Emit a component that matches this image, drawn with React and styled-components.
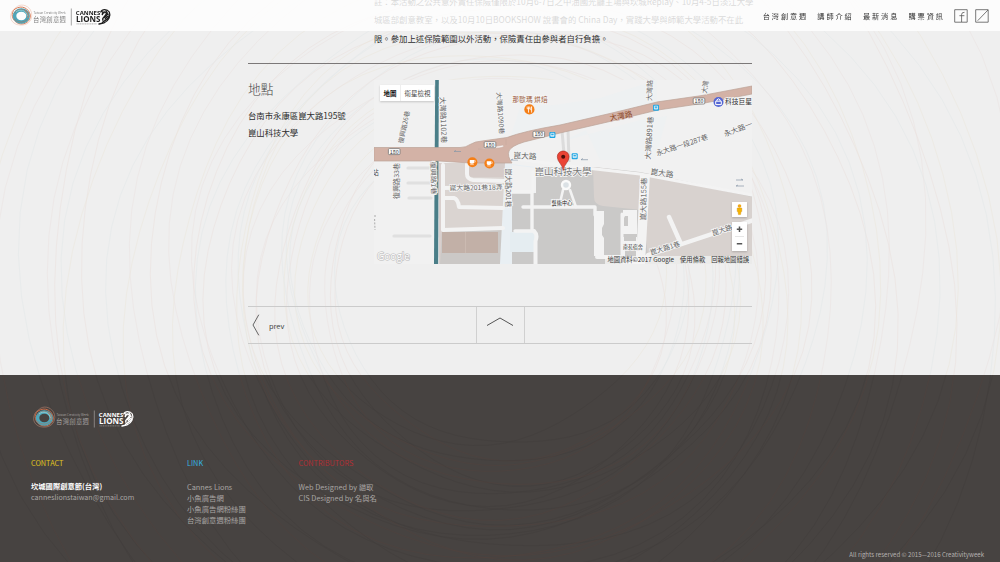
import React from 'react';
import styled, { createGlobalStyle } from 'styled-components';

const SANS = `"Noto Sans CJK TC", "Noto Sans", sans-serif`;

const GlobalStyle = createGlobalStyle`
  * { box-sizing: border-box; }
  html, body { margin: 0; padding: 0; }
  body { background: #efefef; font-family: ${SANS}; color: #333; overflow: hidden; }
  a { color: inherit; text-decoration: none; }
  p, h2, h3, ul { margin: 0; padding: 0; font-weight: inherit; list-style: none; }
`;

const Page = styled.div`
  position: relative;
  height: 562px;
  display: flex;
  flex-direction: column;
  overflow: hidden;
`;

const Backdrop = styled.svg`
  position: absolute;
  inset: 0;
  pointer-events: none;
`;

const Header = styled.header`
  position: fixed;
  top: 0;
  left: 0;
  z-index: 5;
  width: 100%;
  height: 31px;
  padding: 0 11.5px 0 8px;
  display: flex;
  align-items: center;
  justify-content: space-between;
  background: rgba(255, 255, 255, 0.82);
`;

const Nav = styled.nav`
  display: flex;
  align-items: center;
`;

const NavLink = styled.a`
  margin-right: 9.2px;
  font-size: 7.2px;
  line-height: 12px;
  letter-spacing: 1.9px;
  color: #333;
  white-space: nowrap;
`;

const Social = styled.a`
  display: block;
  width: 14px;
  height: 14px;
  margin-left: ${(p) => p.$gap || 0}px;
  svg { display: block; }
`;

const Content = styled.main`
  position: relative;
  width: 504px;
  height: 375px;
  flex: none;
  margin: 0 auto;
`;

const Notice = styled.p`
  margin: -8.5px -10px 0 126px;
  font-size: 8.38px;
  line-height: 18.7px;
  color: #2d2d2d;
  white-space: nowrap;
`;

const Venue = styled.section`
  display: flex;
  margin-top: 15.4px;
  padding-top: 16px;
  border-top: 1px solid #7b7878;
`;

const VenueInfo = styled.div`
  width: 126px;
`;

const VenueTitle = styled.h2`
  margin-top: 0;
  font-size: 12.7px;
  font-weight: 300;
  line-height: 18px;
  color: #444;
`;

const Address = styled.p`
  margin-top: 9px;
  font-size: 8.4px;
  line-height: 16.8px;
  color: #2b2b2b;
  white-space: nowrap;
`;

const MapFrame = styled.div`
  position: relative;
  width: 378px;
  height: 184px;
  overflow: hidden;
  svg { display: block; }
`;

const MapTypes = styled.div`
  position: absolute;
  left: 6px;
  top: 5px;
  display: flex;
  height: 16px;
  background: #fff;
  box-shadow: 0 1px 2px rgba(0, 0, 0, 0.18);
`;

const MapType = styled.button`
  width: ${(p) => p.$width}px;
  padding: 0;
  border: 0;
  border-left: ${(p) => (p.$active ? 0 : '1px solid #eee')};
  background: none;
  font: ${(p) => (p.$active ? 700 : 400)} 6.5px/16px ${SANS};
  color: ${(p) => (p.$active ? '#111' : '#444')};
`;

const MapTools = styled.div`
  position: absolute;
  right: 5px;
  top: 122px;
  display: flex;
  flex-direction: column;
  gap: 5px;
`;

const ToolBox = styled.div`
  width: 15px;
  display: flex;
  flex-direction: column;
  align-items: center;
  background: #fff;
  box-shadow: 0 1px 2px rgba(0, 0, 0, 0.2);
`;

const Credits = styled.div`
  position: absolute;
  right: 0;
  bottom: 0;
  height: 8px;
  padding: 0 3px 0 2px;
  display: flex;
  gap: 6px;
  background: rgba(245, 245, 245, 0.75);
  font-size: 6.3px;
  line-height: 8px;
  color: #333;
  white-space: nowrap;
`;

const Pager = styled.div`
  display: grid;
  grid-template-columns: 229px 47.5px 1fr;
  height: 38px;
  margin-top: 42px;
  border-top: 1px solid #cbcbcb;
  border-bottom: 1px solid #cbcbcb;
`;

const PagerCell = styled.a`
  display: flex;
  align-items: center;
  padding-left: ${(p) => p.$indent || 0}px;
  gap: 9px;
  border-right: ${(p) => (p.$last ? 0 : '1px solid #d0d0d0')};
  font-size: 7.4px;
  color: #444;
`;

const Footer = styled.footer`
  position: relative;
  flex: 1;
  padding: 28px 16px 0 31px;
  background: #474341;
  color: #aaa7a5;
  font-size: 7.35px;
  line-height: 11px;
`;

const FooterLogo = styled.div`
  height: 30px;
`;

const Columns = styled.div`
  display: flex;
  margin-top: 25px;
  height: 91px;
`;

const Column = styled.div`
  width: ${(p) => p.$width}px;
  white-space: nowrap;
`;

const ColumnTitle = styled.h3`
  margin-bottom: 12px;
  color: ${(p) => p.$color};
  font-size: 7.3px;
`;

const Strong = styled.p`
  color: #fff;
  font-weight: 700;
  font-size: 7.3px;
`;

const Email = styled.p`
  font-size: 7.12px;
`;

const Copyright = styled.p`
  font-size: 6.1px;
  text-align: right;
  color: #b5b2b0;
`;

function wobble(cx, cy, rx, ry, phase) {
  const points = [];
  for (let i = 0; i <= 72; i += 1) {
    const t = (i / 72) * Math.PI * 2;
    const k = 1 + 0.04 * Math.sin(2 * t + phase) + 0.012 * Math.sin(5 * t + phase * 2.3);
    points.push(`${(cx + rx * k * Math.cos(t)).toFixed(1)} ${(cy + ry * k * Math.sin(t)).toFixed(1)}`);
  }
  return `M${points.join('L')}Z`;
}

const threadColors = ['#d99a88', '#a9c6cc', '#dcc080', '#d9a8a0'];

function Threads({ opacity, dark }) {
  const rings = [];
  for (let i = 0; i < 40; i += 1) {
    const r = i < 24 ? 165 + i * 5.5 : 297 + (i - 24) * 14;
    rings.push(
      <path
        key={i}
        d={wobble(500 + Math.sin(i * 2.1) * 14, 285 + Math.cos(i * 1.7) * 12, r, r * 0.98, i * 1.37)}
        stroke={dark ? (i % 3 ? '#2b2726' : '#7a4030') : threadColors[i % threadColors.length]}
      />
    );
  }
  return <g fill="none" strokeWidth="0.5" opacity={opacity}>{rings}</g>;
}

function Logo({ ink, sub }) {
  return (
    <svg width="106" height="30" viewBox="8 1 106 30">
      <g fill="none">
        <path d="M16 7.5C20 3.5 27 4.5 30.5 10C34 17 30 24.5 23 25C15 26 9 21 11 14C12 10.5 13 9.5 16 7.5Z" stroke="#e4a184" strokeWidth=".5" opacity=".8" />
        <path d="M15 9C22 4.5 29 8.5 30.3 15C31 21 25 25.5 18.5 23.5C12 21 10 13 15 9Z" stroke="#d5714a" strokeWidth=".9" />
        <ellipse cx="21.3" cy="16" rx="6.8" ry="6" stroke="#4fa6b9" strokeWidth="3.6" />
        <path d="M14 13.5C17 8 25 8 28.5 13M28 19C23 24 16 22 14 18.5" stroke="#7d8a88" strokeWidth="1" />
        <path d="M16 12C20 8.6 26 10 27.5 16" stroke="#8ccbd3" strokeWidth="1" />
        <path d="M25 10.5Q29 13 28 18" stroke="#cf7c5a" strokeWidth=".9" />
      </g>
      <text x="33.5" y="13.6" fontFamily={SANS} fontSize="2.9" fill={sub} textLength="32">Taiwan Creativity Week</text>
      <text x="33" y="21.5" fontFamily={SANS} fontSize="6.4" fill={sub} textLength="33">台灣創意週</text>
      <path d="M71.3 8.5V25.5" stroke={sub} strokeWidth=".7" />
      <g fill={ink} fontFamily={`"Open Sans", Lato, ${SANS}`} fontWeight="700">
        <text x="75.8" y="15" fontSize="5.4" textLength="24.5" lengthAdjust="spacingAndGlyphs">CANNES</text>
        <text x="76" y="22.2" fontSize="8.2" textLength="24.5" lengthAdjust="spacingAndGlyphs">LIONS</text>
      </g>
      <path d="M76.5 23.9H97" stroke={ink} strokeWidth=".7" strokeDasharray="1.2 .5" opacity=".5" />
      <g fill="none" stroke={ink} strokeLinecap="round">
        <path d="M100.8 12C102 9 107 8.7 109.3 12C111 16 108.5 21 104 22.8L99 24" strokeWidth="1.3" />
        <path d="M102.3 14.5C103 11 107 11.5 106.3 14C105.7 17 101.8 17 102.8 20M109.3 16C108 20 104.5 20 102.5 22.5" strokeWidth="1.5" />
        <path d="M101.8 11.5L104 13M106 10.5L108.5 15M105 19L107.5 16.5M104.5 17.5L108 14" strokeWidth="1.1" />
      </g>
    </svg>
  );
}

function Shield({ x, y }) {
  return (
    <g>
      <rect x={x - 5.8} y={y - 3} width="11.6" height="6" rx="1" fill="#fff" stroke="#777" strokeWidth=".8" />
      <text x={x} y={y + 2} fontSize="5.3" textAnchor="middle" fill="#333">180</text>
    </g>
  );
}

function Stop({ x, y }) {
  return (
    <g>
      <rect x={x - 3} y={y - 3} width="6" height="6" rx="1" fill="#1ca4e2" />
      <path d={`M${x - 1.6} ${y - 1.7}h3.2v3h-3.2zM${x - 1.6} ${y + 0.4}h3.2`} fill="none" stroke="#fff" strokeWidth=".7" />
    </g>
  );
}

function Cafe({ x, y }) {
  return (
    <g>
      <circle cx={x} cy={y} r="5" fill="#f57f17" />
      <path d={`M${x - 2.6} ${y - 2.2}h4.2v2.4q0 1.4-2.1 1.4t-2.1-1.4z`} fill="#fff" />
      <path d={`M${x + 1.6} ${y - 1.6}h1.2v1.5h-1.2M${x - 2.2} ${y + 2.4}h3.6`} fill="none" stroke="#fff" strokeWidth=".6" />
    </g>
  );
}

const mapLabels = [
  { t: '復興路26巷', x: 404, y: 127, r: -78, s: 6.6, w: 33 },
  { t: '大灣路1102巷', x: 443.5, y: 120, r: 88, s: 7.2, w: 46 },
  { t: '大灣路1090巷', x: 500.5, y: 113, r: 86, s: 6.6, w: 42 },
  { t: '復興路33巷', x: 396.5, y: 181, r: -90, s: 6.8, w: 36 },
  { t: '復興路1巷', x: 433.5, y: 178, r: 88, s: 6.6, w: 33 },
  { t: '崑大路201巷18弄', x: 476, y: 187.5, r: -1, s: 6.8, w: 53 },
  { t: '崑大路201巷', x: 508, y: 188, r: 90, s: 6.6, w: 39 },
  { t: '崑大路', x: 525, y: 155.8, r: 3, s: 7.8, w: 23 },
  { t: '大灣路', x: 649.5, y: 90.3, r: -88, s: 7, w: 21 },
  { t: '大灣', x: 705, y: 87, r: -80, s: 7, w: 13 },
  { t: '大灣路891巷', x: 649, y: 138, r: -86, s: 7.2, w: 43 },
  { t: '永大路一段287巷', x: 682, y: 145, r: -18, s: 7.2, w: 54 },
  { t: '永大路一 ', x: 738, y: 129, r: -21, s: 7.2, w: 30 },
  { t: '崑大路', x: 662, y: 173, r: 8, s: 7.8, w: 23 },
  { t: '崑大路155巷', x: 643.5, y: 199, r: -89, s: 7.2, w: 43 },
  { t: '崑大路1巷', x: 665, y: 248, r: -17, s: 7, w: 31 },
  { t: '崑大路', x: 722, y: 230, r: -17, s: 7.2, w: 21 },
];

function CampusMap() {
  return (
    <svg width="378" height="184" viewBox="374 80 378 184" fontFamily={SANS}>
      <rect x="374" y="80" width="378" height="184" fill="#f1f1f1" />
      <path d="M520 107L555 105L600 98L657 80V104L565 128L510 138L516 120ZM560 142L640 120L667 116L655 160H600L586 130Z" fill="#eef1f2" />
      <g fill="none" stroke="#e0e0e0" strokeWidth="3.2" strokeLinecap="round">
        <path d="M408 168H431M408 183H431M409 198H431M394 236H430" />
      </g>

      <path d="M443 163H505L504 228L442 232Z" fill="#dad4d1" />
      <path d="M439 163H442V264H439Z" fill="#d9cfcd" />
      <path d="M466 163H506V177H474Q466 177 466 172Z" fill="#d5cbc8" />
      <path d="M442 230L503 229V264H440Z" fill="#cbc8c6" />
      <path d="M442 232H498V253H442Z" fill="#c2b0a7" />
      <path d="M465.5 232V253" stroke="#cbbab1" strokeWidth="1" />

      <path d="M536 167H594L640 172L752 195V264H512V193H536Z" fill="#cac9c8" />
      <path d="M593 167L640 173L752 197V256H648L642 210L603 206Q594 205 594 197Z" fill="#d8d2cf" />
      <path d="M505 163L535 167V193H512V264H500Z" fill="#e9eff3" />
      <path d="M512 165L535 168V191H512Z" fill="#f1f1f1" />
      <path d="M512 198L531 198V230H512ZM512 252H532V264H512Z" fill="#cac9c8" />
      <path d="M510 232H536V252H510Z" fill="#e5edf1" />

      <g fill="none" stroke="#f3f3f3" strokeLinecap="round" strokeLinejoin="round">
        <path d="M443 165V230L503 228M443 198H454Q458 199 459 207L503 208" strokeWidth="4" />
        <path d="M467 163V174Q467 179 473 180L505 181M443 188L504 187" strokeWidth="4" />
        <path d="M515 231H534M523 207H595V215M507 192H533V172M532 194V230" strokeWidth="3.4" />
        <path d="M563 190L559 207M570 190L576 207" strokeWidth="2.6" />
        <path d="M534 231Q538 235 535.5 241V264M597 257H648" strokeWidth="4" />
        <path d="M622 214V262" strokeWidth="3" />
        <path d="M648 255L682 244L754 220M669 217L681 244" strokeWidth="4.4" />
        <path d="M510 158L560 165L640 174L752 195" strokeWidth="3" />
      </g>
      <path d="M640 174H650L645 264H636ZM594 211H604V224L602 228V235L604 238V256H594ZM623 210H637V234H623ZM623 237H637V264H623Z" fill="#f3f3f3" />
      <path d="M625 216H628V226H624V218ZM624 237H636V241H624ZM625 246H636V258H625Z" fill="#cac9c8" />
      <circle cx="566" cy="185" r="4" fill="#dbe1e5" stroke="#fafafa" strokeWidth="2.4" />
      <path d="M562 131L565 165M568 129L569 162" stroke="#dcdcdc" strokeWidth="3" fill="none" />

      <path d="M435.2 80H438.8L438.2 264H434Z" fill="#4a7e88" />
      <path
        d="M374 147.5H460Q466 147.5 470 144.5Q475 141.4 482 141L507 137.5Q524 131 560 125L612 113L658 101.8L702 95.5L752 86V94L702 103.5L658 110L612 121L560 133L524 142Q511 146 509 151Q507 156 512 163H470L439 161H374Z"
        fill="#d3b2a6"
        stroke="#bba398"
        strokeWidth=".7"
      />
      <path d="M478 149L503 145Q506 147 499 148ZM506 139V145" fill="#f4efed" stroke="#c7aaa0" strokeWidth=".6" />
      <g stroke="#8797a8" strokeWidth=".7" fill="none">
        <path d="M461 151.5H454L456 150.4M588 159.7H581L583 158.5M736 180H743L741 179M744 186H736L738 185M518 160H511L513 159" />
      </g>

      <g fill="#666" stroke="#f5f5f5" strokeWidth="1.6" paintOrder="stroke" textAnchor="middle">
        {mapLabels.map((l) => (
          <text
            key={`${l.t}${l.x}`}
            transform={`translate(${l.x} ${l.y}) rotate(${l.r})`}
            y={l.s * 0.37}
            fontSize={l.s}
            textLength={l.w}
            lengthAdjust="spacingAndGlyphs"
          >
            {l.t}
          </text>
        ))}
        <text x="563" y="175" fontSize="9.6" textLength="57" fill="#777">崑山科技大學</text>
        <text x="562" y="205" fontSize="5.4" textLength="21" fill="#222">藝術中心</text>
        <text x="633" y="248.6" fontSize="5.2" textLength="20" fill="#333">南苑宿舍</text>
        <text x="530" y="102" fontSize="6.6" textLength="35" fill="#9a5534">那歐瑪 烘焙</text>
        <text x="738.5" y="104" fontSize="6.8" textLength="27" fill="#333">科技巨星</text>
        <text transform="translate(621.5 118.5) rotate(-11)" fontSize="7.6" textLength="23" fill="#8a4727" stroke="#d3b2a6">大灣路</text>
        <text x="375.4" y="175" fontSize="6.5" fill="#444">站</text>
      </g>
      <path d="M375 215V217M374.6 219L375 230" stroke="#999" strokeWidth=".8" strokeDasharray="2 1.4" />
      <Shield x={394.2} y={151.6} />
      <Shield x={490} y={144.7} />
      <Shield x={538.8} y={134.3} />
      <Shield x={699} y={101} />
      <Stop x={552.4} y={135} />
      <Stop x={574.7} y={156.3} />
      <Stop x={656} y={107.8} />
      <Cafe x={472.4} y={162.2} />
      <Cafe x={489.4} y={163.5} />
      <circle cx="529.4" cy="109.4" r="5.1" fill="#f57f17" />
      <path d="M527.2 106.5V108.8M528.5 106.5V112.6M529.7 106.5V108.8H527.2M531.6 112.6V106.6Q530.6 108 530.8 110H531.6" fill="none" stroke="#fff" strokeWidth=".8" />
      <circle cx="718.5" cy="102" r="5" fill="#5365d3" />
      <path d="M715.7 101.2H721.3V104.6H715.7ZM716.9 101V99.8Q718.5 97.8 720.1 99.8V101" fill="none" stroke="#fff" strokeWidth="1" />
      <path d="M563.2 170.5C562.7 164.5 557.3 162 557.3 156.8C557.3 153.3 560 151 563.2 151C566.4 151 569.1 153.3 569.1 156.8C569.1 162 563.7 164.5 563.2 170.5Z" fill="#ea4335" stroke="#a52c22" strokeWidth=".6" />
      <circle cx="563.2" cy="156.7" r="2" fill="#4b0f0b" />
      <text x="377" y="260" fontFamily={`"Open Sans", sans-serif`} fontSize="10.5" fill="#fff" stroke="#bbb" strokeWidth="1.2" paintOrder="stroke" textLength="33" lengthAdjust="spacingAndGlyphs">Google</text>
    </svg>
  );
}

export default function App() {
  return (
    <Page>
      <GlobalStyle />
      <Backdrop width="1000" height="375" viewBox="0 0 1000 375">
        <Threads opacity={0.18} />
      </Backdrop>
      <Header>
        <Logo ink="#1d1d1d" sub="#7f7f7f" />
        <Nav>
          <NavLink>台灣創意週</NavLink>
          <NavLink>講師介紹</NavLink>
          <NavLink>最新消息</NavLink>
          <NavLink>購票資訊</NavLink>
          <Social>
            <svg width="14" height="14" viewBox="0 0 14 14" fill="none" stroke="#555" strokeWidth=".8">
              <path d="M.7.7H13.2V13.2H.7ZM7.6 13V5.5Q7.6 3.2 10.5 3.3M5.4 6.7H10.4" />
            </svg>
          </Social>
          <Social $gap={6.5}>
            <svg width="14" height="14" viewBox="0 0 14 14" fill="none" stroke="#555" strokeWidth=".8">
              <path d="M.7.7H13.2V13.2H.7ZM2.7 11.7L13 1" />
            </svg>
          </Social>
        </Nav>
      </Header>

      <Content>
        <Notice>
          註：本活動之公共意外責任保險僅限於10月6-7日之中油國光廳主場與坎城Replay、10月4-5日淡江大學<br />
          城區部創意教室，以及10月10日BOOKSHOW 說書會的 China Day，實踐大學與師範大學活動不在此<br />
          限。參加上述保險範圍以外活動，保險責任由參與者自行負擔。
        </Notice>
        <Venue>
          <VenueInfo>
            <VenueTitle>地點</VenueTitle>
            <Address>
              台南市永康區崑大路195號<br />
              崑山科技大學
            </Address>
          </VenueInfo>
          <MapFrame>
            <CampusMap />
            <MapTypes>
              <MapType $active $width={20}>地圖</MapType>
              <MapType $width={34}>衛星檢視</MapType>
            </MapTypes>
            <MapTools>
              <ToolBox>
                <svg width="15" height="15" viewBox="0 0 15 15">
                  <circle cx="7.5" cy="4" r="1.8" fill="#f0a91c" />
                  <path d="M5.2 6H9.8V9.6H9L8.6 12.6H6.4L6 9.6H5.2Z" fill="#f5b400" stroke="#cf8a16" strokeWidth=".4" />
                </svg>
              </ToolBox>
              <ToolBox>
                <svg width="15" height="29" viewBox="0 0 15 29" stroke="#555" strokeWidth="1.5">
                  <path d="M4.8 7.3H10.2M7.5 4.6V10M4.8 21.7H10.2" />
                  <path d="M3 14.5H12" stroke="#e6e6e6" strokeWidth="1" />
                </svg>
              </ToolBox>
            </MapTools>
            <Credits>
              <span>地圖資料©2017 Google</span>
              <span>使用條款</span>
              <span>回報地圖錯誤</span>
            </Credits>
          </MapFrame>
        </Venue>
        <Pager>
          <PagerCell $indent={4}>
            <svg width="8" height="22" viewBox="0 0 8 22" fill="none" stroke="#555" strokeWidth=".9">
              <path d="M6.8 .7L1 11L6.8 21.3" />
            </svg>
            prev
          </PagerCell>
          <PagerCell $indent={9}>
            <svg width="28" height="22" viewBox="0 0 28 22" fill="none" stroke="#555" strokeWidth="1">
              <path d="M1 11.5L14 4L27 11.5" />
            </svg>
          </PagerCell>
          <PagerCell $last />
        </Pager>
      </Content>

      <Footer>
        <Backdrop width="1000" height="187" viewBox="0 375 1000 187">
          <Threads opacity={0.2} dark />
        </Backdrop>
        <FooterLogo>
          <Logo ink="#ffffff" sub="#a5a2a0" />
        </FooterLogo>
        <Columns>
          <Column $width={156}>
            <ColumnTitle $color="#e0c420">CONTACT</ColumnTitle>
            <Strong>坎城國際創意節(台灣)</Strong>
            <Email>canneslionstaiwan@gmail.com</Email>
          </Column>
          <Column $width={111.5}>
            <ColumnTitle $color="#35b4e0">LINK</ColumnTitle>
            <ul>
              <li>Cannes Lions</li>
              <li>小魚廣告網</li>
              <li>小魚廣告網粉絲團</li>
              <li>台灣創意週粉絲團</li>
            </ul>
          </Column>
          <Column $width={120}>
            <ColumnTitle $color="#b32f35">CONTRIBUTORS</ColumnTitle>
            <p>Web Designed by 貓取</p>
            <p>CIS Designed by 名與名</p>
          </Column>
        </Columns>
        <Copyright>All rights reserved © 2015—2016 Creativityweek</Copyright>
      </Footer>
    </Page>
  );
}
